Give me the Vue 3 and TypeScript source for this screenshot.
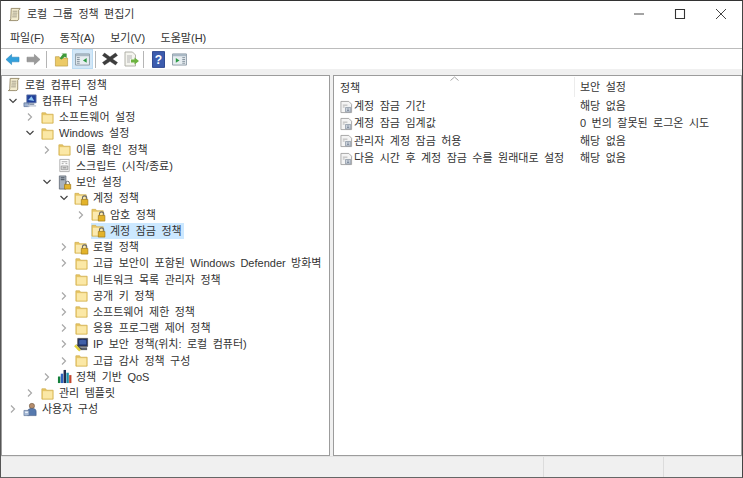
<script setup lang="ts">
type Row = { level: number; chevron: '' | 'open' | 'closed'; icon: string; text: string; selected?: boolean }

const menus: string[] = ['파일(F)', '동작(A)', '보기(V)', '도움말(H)']

const rows: Row[] = [
  { level: -1, chevron: '', icon: 'scroll', text: '로컬 컴퓨터 정책' },
  { level: 0, chevron: 'open', icon: 'computer', text: '컴퓨터 구성' },
  { level: 1, chevron: 'closed', icon: 'folder', text: '소프트웨어 설정' },
  { level: 1, chevron: 'open', icon: 'folder', text: 'Windows 설정' },
  { level: 2, chevron: 'closed', icon: 'folder', text: '이름 확인 정책' },
  { level: 2, chevron: '', icon: 'script', text: '스크립트 (시작/종료)' },
  { level: 2, chevron: 'open', icon: 'server', text: '보안 설정' },
  { level: 3, chevron: 'open', icon: 'lockfolder', text: '계정 정책' },
  { level: 4, chevron: 'closed', icon: 'lockfolder', text: '암호 정책' },
  { level: 4, chevron: '', icon: 'lockfolder', text: '계정 잠금 정책', selected: true },
  { level: 3, chevron: 'closed', icon: 'lockfolder', text: '로컬 정책' },
  { level: 3, chevron: 'closed', icon: 'folder', text: '고급 보안이 포함된 Windows Defender 방화벽' },
  { level: 3, chevron: '', icon: 'folder', text: '네트워크 목록 관리자 정책' },
  { level: 3, chevron: 'closed', icon: 'folder', text: '공개 키 정책' },
  { level: 3, chevron: 'closed', icon: 'folder', text: '소프트웨어 제한 정책' },
  { level: 3, chevron: 'closed', icon: 'folder', text: '응용 프로그램 제어 정책' },
  { level: 3, chevron: 'closed', icon: 'ipsec', text: 'IP 보안 정책(위치: 로컬 컴퓨터)' },
  { level: 3, chevron: 'closed', icon: 'folder', text: '고급 감사 정책 구성' },
  { level: 2, chevron: 'closed', icon: 'chart', text: '정책 기반 QoS' },
  { level: 1, chevron: 'closed', icon: 'folder', text: '관리 템플릿' },
  { level: 0, chevron: 'closed', icon: 'user', text: '사용자 구성' },
]

const policies: { name: string; value: string }[] = [
  { name: '계정 잠금 기간', value: '해당 없음' },
  { name: '계정 잠금 임계값', value: '0 번의 잘못된 로그온 시도' },
  { name: '관리자 계정 잠금 허용', value: '해당 없음' },
  { name: '다음 시간 후 계정 잠금 수를 원래대로 설정', value: '해당 없음' },
]

function indent(level: number): string {
  return level < 0 ? '4px' : `${6 + 17 * level}px`
}
</script>

<template>
  <div class="window">
    <svg class="defs" width="0" height="0" aria-hidden="true">
      <defs>
        <symbol id="folder" viewBox="0 0 16 16">
          <path d="M2 3h4l1 1.500h7V14H2z" fill="#e8c665" stroke="#d2b052" stroke-width=".8" />
          <path d="M3 5.500h10.200V13.400H3z" fill="#fbe8a6" />
        </symbol>
        <symbol id="lockfolder" viewBox="0 0 16 16">
          <path d="M1 2.500h4l1 1.500h7v10H1z" fill="#e8c665" stroke="#d2b052" stroke-width=".8" />
          <path d="M2 5h10.200v8.400H2z" fill="#fbeab0" />
          <path d="M9 9V7.500a2.300 2.300 0 0 1 4.600 0V9" fill="none" stroke="#6b6b6b" stroke-width="1.100" />
          <path d="M7.800 9h7v6h-7z" fill="#e3b32a" stroke="#9a7412" stroke-width=".7" />
        </symbol>
        <symbol id="scroll" viewBox="0 0 16 16">
          <path d="M4.500 1.500h9.500l-1.500 2V13a2 2 0 0 1-2 1.500H2.500A2 2 0 0 0 4 12.500z" fill="#f3eccf" stroke="#8c7f5c" stroke-width=".9" />
          <path d="M6 4.500h5M6 6.500h5M5.700 8.500h5M5.500 10.500h5" stroke="#8f8a78" stroke-width=".8" />
        </symbol>
        <symbol id="computer" viewBox="0 0 16 16">
          <path d="M1 10.500h5.500v4H1z" fill="#9fb3d1" stroke="#51688f" stroke-width=".7" />
          <path d="M4 2h10v8.500H4z" fill="#20409a" stroke="#6c7fa8" stroke-width=".8" />
          <path d="M5.500 7.500 9 3.500l3 5z" fill="#8fc6f0" />
          <path d="M7 11h5v1.800H7z" fill="#8b97ad" />
          <path d="M5 13h9v1.500H5z" fill="#c3cad6" />
        </symbol>
        <symbol id="user" viewBox="0 0 16 16">
          <circle cx="9.500" cy="4.200" r="2.800" fill="#b58d6c" stroke="#6a5340" stroke-width=".6" />
          <path d="M5 14.500V10a4.500 3.200 0 0 1 9 0v4.500z" fill="#5679ae" stroke="#38527c" stroke-width=".6" />
          <path d="M1 9h5.500v5.500H1z" fill="#a9bcd8" stroke="#5c7296" stroke-width=".7" />
          <path d="M2.300 10.300h2.900v1.400H2.300z" fill="#eef3fa" />
        </symbol>
        <symbol id="script" viewBox="0 0 16 16">
          <path d="M3 1.500h10v13H3z" fill="#fdfdfd" stroke="#a5a5a5" stroke-width=".9" />
          <path d="M5 4h6M5 6h2M9 6h2" stroke="#9b9b9b" stroke-width=".9" />
          <path d="M4.500 8.500h7v4h-7z" fill="#e2e2e2" stroke="#8c8c8c" stroke-width=".8" />
          <path d="M6 10.500h4" stroke="#777" stroke-width=".9" />
        </symbol>
        <symbol id="server" viewBox="0 0 16 16">
          <path d="M2.500 1h7v14h-7z" fill="#a9b2bd" stroke="#59626e" stroke-width=".8" />
          <path d="M4 3h4M4 5h4" stroke="#3f4954" stroke-width="1" />
          <path d="M9.300 10V8.700a2 2 0 0 1 4 0V10" fill="none" stroke="#6b6b6b" stroke-width="1" />
          <path d="M8 10h6.600v5H8z" fill="#e3b32a" stroke="#9a7412" stroke-width=".7" />
        </symbol>
        <symbol id="ipsec" viewBox="0 0 16 16">
          <path d="M4 1.500h10.500V10H4z" fill="#1d2f66" stroke="#525252" stroke-width=".9" />
          <path d="M5.500 3.500 9 2.800l4 .7v4.500H5.500z" fill="#3f5fa8" />
          <path d="M4 11h10v3H4z" fill="#5a5f69" />
          <path d="m1 9 5.500 5.500" stroke="#e2d23c" stroke-width="2.600" />
          <path d="m3 8 5 5" stroke="#30343a" stroke-width=".9" />
        </symbol>
        <symbol id="chart" viewBox="0 0 16 16">
          <path d="M1 8h2.600v7H1z" fill="#14803b" />
          <path d="M4 5h2.600v10H4z" fill="#2f62c2" />
          <path d="M7 1h2.600v14H7z" fill="#212c4f" />
          <path d="M10 4h2.600v11H10z" fill="#1d8fa8" />
          <path d="M13 6.500h2.400V15H13z" fill="#c4472f" />
        </symbol>
        <symbol id="doc" viewBox="0 0 14 14">
          <path d="M1 1h8.500l3 3v9H1z" fill="#f4f4f4" stroke="#9a9a9a" stroke-width=".9" />
          <path d="M3 5h5M3 7h2" stroke="#a5a5a5" stroke-width=".9" />
          <path d="M6 7.500h5.500v4.800H6z" fill="#d4dae2" stroke="#84909f" stroke-width=".8" />
          <path d="M7.500 9.200h2.500M7.500 10.800h2.500" stroke="#69788c" stroke-width=".8" />
        </symbol>
      </defs>
    </svg>

    <header class="titlebar">
      <svg class="title-icon"><use href="#scroll" /></svg>
      <span class="title">로컬 그룹 정책 편집기</span>
      <div class="controls">
        <svg class="ctl" viewBox="0 0 12 12"><path d="M1 6h10" stroke="#7d7d7d" stroke-width="1.400" /></svg>
        <svg class="ctl" viewBox="0 0 12 12"><path d="M1.500 1.500h9v9h-9z" fill="none" stroke="#333" stroke-width="1.100" /></svg>
        <svg class="ctl" viewBox="0 0 12 12"><path d="m1 1 10 10M11 1 1 11" stroke="#444" stroke-width="1" /></svg>
      </div>
    </header>

    <nav class="menubar">
      <span v-for="m in menus" :key="m" class="menu">{{ m }}</span>
    </nav>

    <div class="toolbar">
      <svg class="tool back" viewBox="0 0 16 14"><path d="M1 7l6-5.500V4.500h8v5H7v3z" fill="#32a0dc" stroke="#2380b8" stroke-width=".6" /></svg>
      <svg class="tool fwd" viewBox="0 0 16 14"><path d="M15 7 9 1.500V4.500H1v5h8v3z" fill="#9a9a9a" stroke="#828282" stroke-width=".6" /></svg>
      <i class="sep first"></i>
      <svg class="tool up" viewBox="0 0 16 16"><path d="M1.500 5h4l1 1.500h8V15h-13z" fill="#ecca66" stroke="#b99a42" stroke-width=".7" /><path d="M6 7 9.500 2 7.500 1.500h6v5l-2-1.500L8 8z" fill="#3f9a3a" /></svg>
      <span class="tool-active">
        <svg class="tool-inner" viewBox="0 0 16 14"><path d="M.5 1h15v12H.5z" fill="#e7edf1" stroke="#8b9aa5" /><path d="M1 1h14v2.500H1z" fill="#a9b8c4" /><path d="M2 5h3M2 7h3M2 9h3M2 11h3" stroke="#7d8c98" /><path d="M12.500 5.500 8.500 8l4 2.500z" fill="#2d9a45" /></svg>
      </span>
      <i class="sep second"></i>
      <svg class="tool del" viewBox="0 0 16 16"><path d="m2.500 2 5.500 4 5.500-4 2 2.500L10.500 8l5 3.500-2 2.500L8 10.300 2.500 14l-2-2.500 5-3.500-5-3.500z" fill="#3d3d3d" stroke="#262626" stroke-width=".4" /></svg>
      <svg class="tool export" viewBox="0 0 16 16"><path d="M2 1h7.500l3 3v11H2z" fill="#f5f5ef" stroke="#a9a9a0" stroke-width=".9" /><path d="M4 5h5M4 7h5M4 9h3M4 11h3" stroke="#adadad" stroke-width=".9" /><path d="M8 8.500h3.500V6.500L16 10l-4.500 3.500v-2H8z" fill="#6cb33f" /></svg>
      <i class="sep third"></i>
      <svg class="tool help" viewBox="0 0 14 18"><path d="M.5.500h13v17H.5z" fill="#3c5cae" stroke="#26408a" /><text x="7" y="13.500" class="help-q">?</text></svg>
      <svg class="tool panel" viewBox="0 0 16 14"><path d="M.5 1h15v12H.5z" fill="#e7edf1" stroke="#8b9aa5" /><path d="M1 1h14v2.500H1z" fill="#a9b8c4" /><path d="M11 5h3M11 7h3M11 9h3M11 11h3" stroke="#7d8c98" /><path d="M4 5.500 8 8l-4 2.500z" fill="#2d9a45" /></svg>
    </div>

    <main class="panes">
      <section class="pane tree">
        <div v-for="r in rows" :key="r.text" class="row" :style="{ paddingLeft: indent(r.level) }">
          <svg v-if="r.level >= 0" class="chev" viewBox="0 0 10 10">
            <path v-if="r.chevron === 'open'" d="m1.500 3 3.500 3.500L8.500 3" fill="none" stroke="#444" stroke-width="1.200" />
            <path v-else-if="r.chevron === 'closed'" d="M3 1.500 6.500 5 3 8.500" fill="none" stroke="#a8a8a8" stroke-width="1.200" />
          </svg>
          <span class="item" :class="{ selected: r.selected }">
            <svg class="ico"><use :href="'#' + r.icon" /></svg>
            <span class="label">{{ r.text }}</span>
          </span>
        </div>
      </section>

      <section class="pane list">
        <div class="thead">
          <span class="col-name">정책<svg class="sort" viewBox="0 0 9 5"><path d="M.5 4.500 4.500 1l4 3.500" fill="none" stroke="#a5a5a5" /></svg></span>
          <span class="col-value">보안 설정</span>
        </div>
        <div v-for="p in policies" :key="p.name" class="lrow">
          <span class="col-name cell"><svg class="doc"><use href="#doc" /></svg>{{ p.name }}</span>
          <span class="col-value cell">{{ p.value }}</span>
        </div>
      </section>
    </main>

    <footer class="status">
      <span class="seg grow"></span>
      <span class="seg mid"></span>
      <span class="seg end"></span>
    </footer>
  </div>
</template>

<style>
html, body { margin: 0; padding: 0; background: #f0f0f0; }
</style>

<style scoped>
.window {
  width: 743px;
  height: 478px;
  box-sizing: border-box;
  display: flex;
  flex-direction: column;
  overflow: hidden;
  background: #f0f0f0;
  border-top: 1px solid #333;
  border-left: 1px solid #555;
  border-right: 1px solid #444;
  border-bottom: 1px solid #666;
  font-family: "Liberation Sans", "Noto Sans CJK KR", sans-serif;
  font-size: 11px;
  word-spacing: 2.4px;
  color: #333;
}
.defs { flex: none; display: block; }
.titlebar {
  flex: none;
  height: 26px;
  background: #fff;
  display: flex;
  align-items: center;
  padding-left: 6px;
}
.title-icon { width: 15px; height: 15px; }
.title { margin-left: 5px; line-height: 16px; }
.controls { margin-left: auto; display: flex; gap: 29px; padding-right: 15px; }
.ctl { width: 12px; height: 12px; }
.menubar {
  flex: none;
  height: 21px;
  background: #fff;
  display: flex;
  align-items: center;
  padding-left: 9px;
  border-bottom: 1px solid #bcbcbc;
}
.menu { margin-right: 15.5px; line-height: 16px; white-space: nowrap; }
.toolbar {
  flex: none;
  height: 20px;
  background: #fff;
  display: flex;
  align-items: center;
  padding-left: 4px;
}
.tool { flex: none; }
.back, .fwd { width: 15px; height: 13px; }
.fwd { margin-left: 6px; }
.sep { flex: none; width: 1px; height: 17px; background: #b5b5b5; }
.sep.first { margin: 0 7px 0 5px; }
.up { width: 15px; height: 15px; }
.tool-active {
  flex: none;
  box-sizing: border-box;
  width: 21px;
  height: 20px;
  margin-left: 3px;
  background: #d3e7f7;
  border: 1px solid #bcdcf3;
  display: flex;
  align-items: center;
  justify-content: center;
}
.tool-inner { width: 15px; height: 13px; }
.sep.second { margin: 0 6px 0 2px; }
.del { width: 16px; height: 16px; }
.export { width: 16px; height: 16px; margin-left: 5px; }
.sep.third { margin: 0 8px 0 4px; }
.help { width: 13px; height: 17px; }
.help-q { font: bold 13px "Liberation Sans", sans-serif; fill: #fff; text-anchor: middle; }
.panel { width: 15px; height: 13px; margin-left: 7px; }
.panes {
  flex: 1;
  min-height: 0;
  display: flex;
  gap: 3px;
  padding-top: 6px;
  background: #f0f0f0;
}
.pane {
  box-sizing: border-box;
  background: #fff;
  border: 1px solid #9c9c9c;
}
.tree { width: 329px; flex: none; padding-top: .6px; }
.list { flex: 1; min-width: 0; border-right-color: #a5a5a5; }
.row {
  height: 16.24px;
  display: flex;
  align-items: center;
  white-space: nowrap;
}
.chev { flex: none; width: 10px; height: 10px; margin-right: 5px; }
.item { display: flex; align-items: center; height: 16px; padding: 0 2px 0 0; }
.item.selected { background: #cce8ff; }
.ico { flex: none; width: 15px; height: 15px; margin-right: 4px; }
.label { line-height: 16px; }
.thead {
  height: 22px;
  display: flex;
  align-items: center;
}
.col-name { position: relative; width: 240px; box-sizing: border-box; padding-left: 6px; flex: none; white-space: nowrap; }
.col-value { flex: 1; padding-left: 5px; white-space: nowrap; border-left: 1px solid #ececec; line-height: 20px; }
.sort { position: absolute; left: 116px; top: -3px; width: 9px; height: 5px; }
.lrow { height: 17.3px; display: flex; align-items: center; }
.cell { display: flex; align-items: center; border: 0; line-height: 17px; }
.cell.col-value { padding-left: 6px; }
.doc { flex: none; width: 13px; height: 14px; margin-right: 1px; }
.status {
  flex: none;
  height: 20px;
  display: flex;
  background: #f0f0f0;
  border-top: 1px solid #e3e3e3;
}
.seg { box-sizing: border-box; border-right: 1px solid #dcdcdc; }
.grow { width: 543px; }
.mid { width: 120px; }
.end { flex: 1; border-right: 0; }
</style>
